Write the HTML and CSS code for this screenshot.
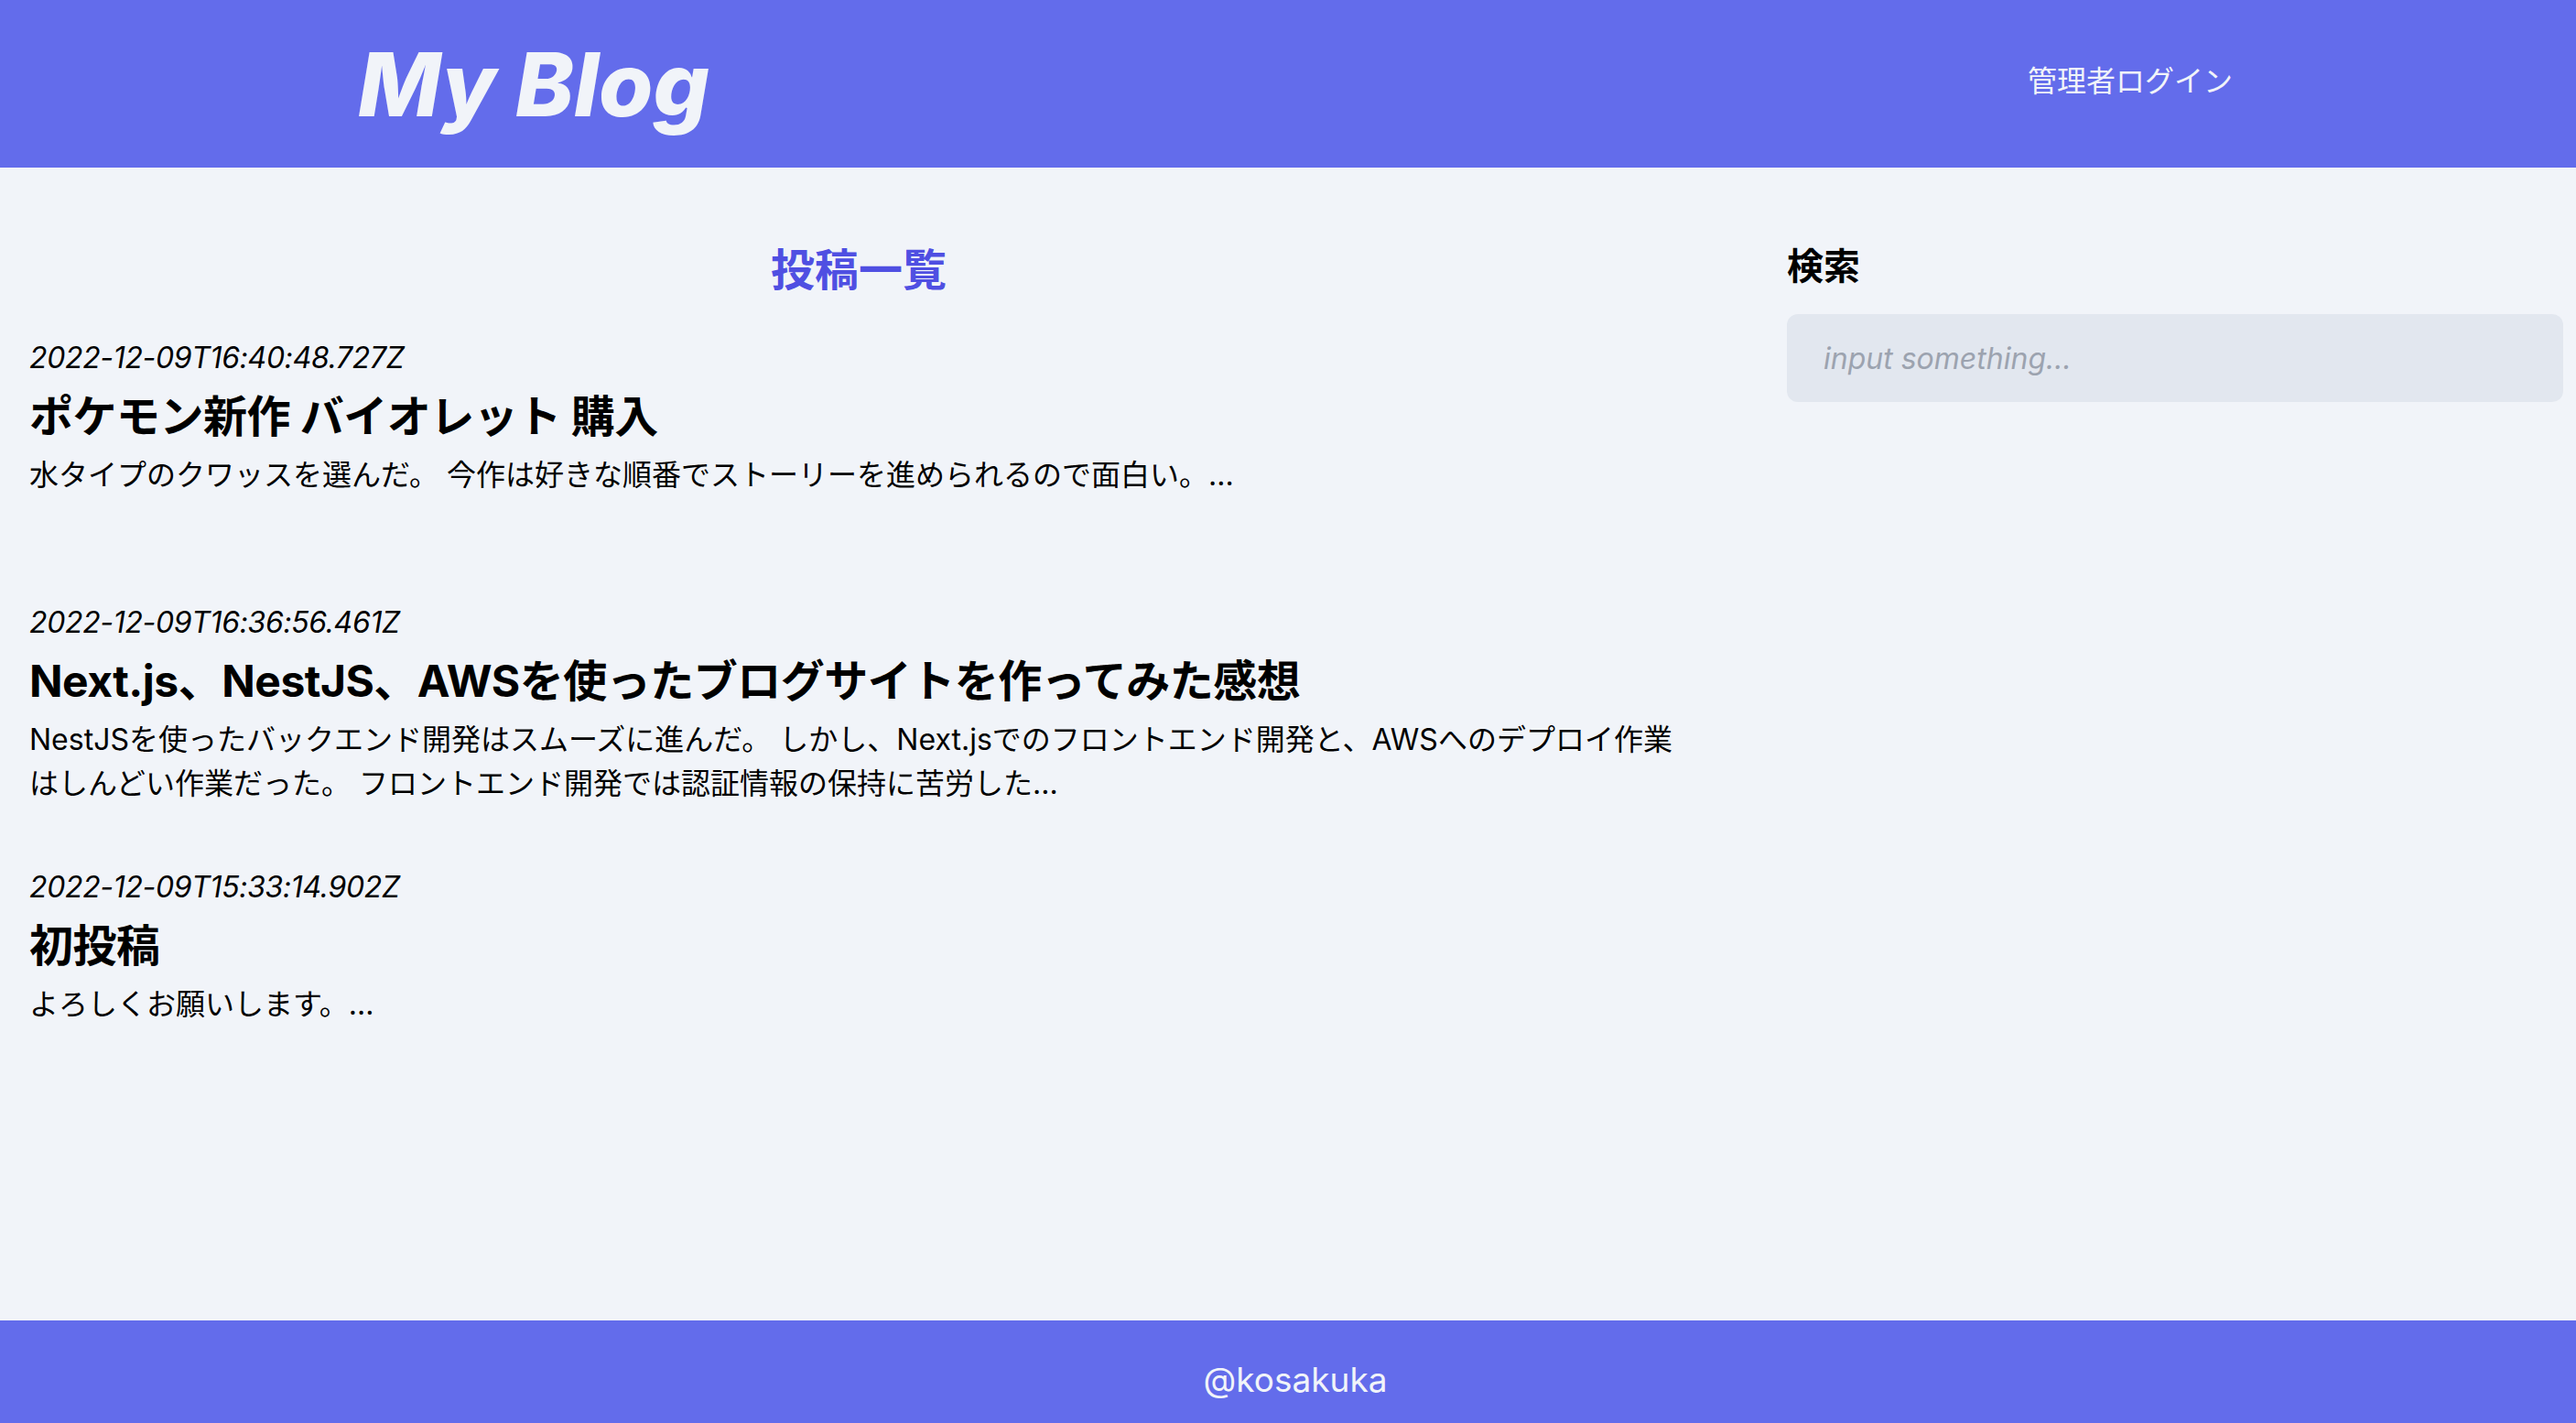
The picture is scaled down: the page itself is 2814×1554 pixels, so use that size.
FILE: index.html
```html
<!DOCTYPE html>
<html lang="ja">
<head>
<meta charset="utf-8">
<title>My Blog</title>
<link rel="stylesheet" href="styles.css">
</head>
<body>
<header class="site-header">
  <a class="logo" href="#">My Blog</a>
  <a class="login" href="#">管理者ログイン</a>
</header>
<main class="layout">
  <section class="posts">
    <h1 class="posts-title">投稿一覧</h1>
    <article class="post">
      <div class="post-date">2022-12-09T16:40:48.727Z</div>
      <h2 class="post-title">ポケモン新作 バイオレット 購入</h2>
      <p class="post-excerpt">水タイプのクワッスを選んだ。 今作は好きな順番でストーリーを進められるので面白い。...</p>
    </article>
    <article class="post">
      <div class="post-date">2022-12-09T16:36:56.461Z</div>
      <h2 class="post-title">Next.js、NestJS、AWSを使ったブログサイトを作ってみた感想</h2>
      <p class="post-excerpt">NestJSを使ったバックエンド開発はスムーズに進んだ。 しかし、Next.jsでのフロントエンド開発と、AWSへのデプロイ作業はしんどい作業だった。 フロントエンド開発では認証情報の保持に苦労した...</p>
    </article>
    <article class="post">
      <div class="post-date">2022-12-09T15:33:14.902Z</div>
      <h2 class="post-title">初投稿</h2>
      <p class="post-excerpt">よろしくお願いします。...</p>
    </article>
  </section>
  <aside class="sidebar">
    <h2 class="sidebar-title">検索</h2>
    <input class="search-input" type="text" placeholder="input something...">
  </aside>
</main>
<footer class="site-footer">@kosakuka</footer>
</body>
</html>
```
FILE: styles.css
```css
html, body {
  margin: 0;
  padding: 0;
}
body {
  background: #f1f4f9;
  color: #000;
  font-family: Inter, "Noto Sans CJK JP", sans-serif;
}
a {
  text-decoration: none;
  color: inherit;
}
.site-header {
  height: 183px;
  background: #636ceb;
  display: flex;
  align-items: center;
  justify-content: space-between;
  padding: 0 375px 0 391px;
  box-sizing: border-box;
}
.logo {
  font-size: 96px;
  line-height: 96px;
  font-weight: 800;
  font-style: italic;
  color: #f1f4f9;
  letter-spacing: 0;
}
.login {
  font-size: 32px;
  line-height: 48px;
  color: #f1f4f9;
  margin-top: -6px;
}
.layout {
  display: flex;
  height: 1259px;
}
.posts {
  width: 1876px;
  flex: 0 0 1876px;
  box-sizing: border-box;
  padding: 80px 32px 0;
}
.posts-title {
  margin: 0 0 40px;
  text-align: center;
  font-size: 48px;
  line-height: 64px;
  font-weight: 700;
  color: #4f4fe2;
}
.post {
  height: 289px;
}
.post-date {
  font-size: 32px;
  line-height: 48px;
  font-style: italic;
  letter-spacing: -0.35px;
}
.post-title {
  margin: 8px 0;
  font-size: 48px;
  line-height: 64px;
  font-weight: 700;
  letter-spacing: -0.5px;
}
.post-excerpt {
  margin: 0;
  font-size: 32px;
  line-height: 48px;
}
.sidebar {
  flex: 1;
  padding: 80px 14px 0 76px;
}
.sidebar-title {
  margin: 0;
  font-size: 40px;
  line-height: 56px;
  font-weight: 700;
}
.search-input {
  display: block;
  margin-top: 24px;
  width: 100%;
  height: 96px;
  box-sizing: border-box;
  padding: 24px 40px;
  border: none;
  border-radius: 12px;
  background: #e2e7ef;
  font-family: inherit;
  font-size: 32px;
  font-style: italic;
  outline: none;
}
.search-input::placeholder {
  color: #9ca3af;
}
.site-footer {
  height: 112px;
  box-sizing: border-box;
  padding: 37px 0 0 16px;
  background: #636ceb;
  color: #f1f4f9;
  text-align: center;
  font-size: 37px;
  line-height: 56px;
}
```
